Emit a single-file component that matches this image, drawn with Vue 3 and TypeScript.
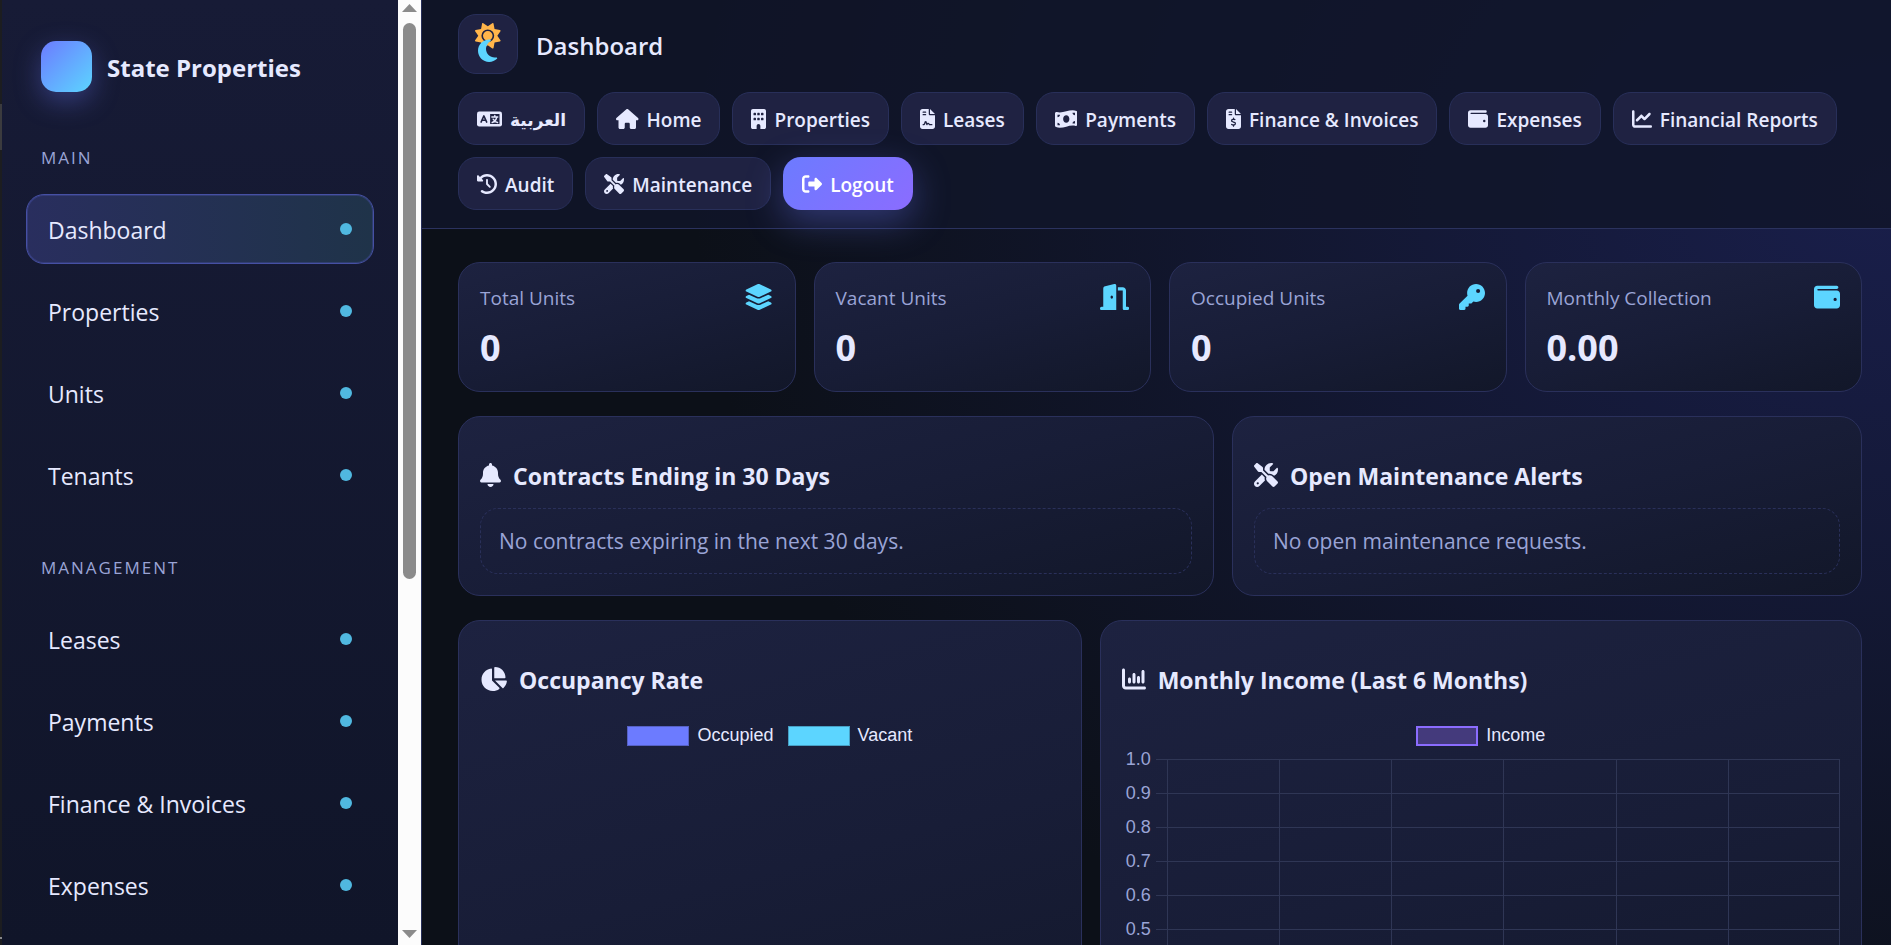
<script setup lang="ts">
interface Glyph {
  w: number
  d: string
}

const filePage =
  'M64 0C28.7 0 0 28.7 0 64L0 448c0 35.3 28.7 64 64 64l256 0c35.3 0 64-28.7 64-64l0-288-128 0c-17.7 0-32-14.3-32-32L224 0 64 0zM256 0l0 128 128 0L256 0z'

const glyphs: Record<string, Glyph> = {
  house: {
    w: 576,
    d: 'M575.8 255.5c0 18-15 32.1-32 32.1l-32 0 .7 160.2c0 2.7-.2 5.4-.5 8.1l0 16.2c0 22.1-17.9 40-40 40l-16 0c-1.1 0-2.2 0-3.3-.1c-1.4 .1-2.8 .1-4.2 .1L416 512l-24 0c-22.1 0-40-17.9-40-40l0-24 0-64c0-17.7-14.3-32-32-32l-64 0c-17.7 0-32 14.3-32 32l0 64 0 24c0 22.1-17.9 40-40 40l-24 0-31.9 0c-1.5 0-3-.1-4.5-.2c-1.2 .1-2.4 .2-3.6 .2l-16 0c-22.1 0-40-17.9-40-40l0-112c0-.9 0-1.9 .1-2.8l0-69.7-32 0c-18 0-32-14-32-32.1c0-9 3-17 10-24L266.4 8c7-7 15-8 22-8s15 2 21 7L564.8 231.5c8 7 12 15 11 24z',
  },
  building: {
    w: 384,
    d: 'M48 0C21.5 0 0 21.5 0 48L0 464c0 26.5 21.5 48 48 48l96 0 0-80c0-26.5 21.5-48 48-48s48 21.5 48 48l0 80 96 0c26.5 0 48-21.5 48-48l0-416c0-26.5-21.5-48-48-48L48 0zM64 240c0-8.8 7.2-16 16-16l32 0c8.8 0 16 7.2 16 16l0 32c0 8.8-7.2 16-16 16l-32 0c-8.8 0-16-7.2-16-16l0-32zm112-16l32 0c8.8 0 16 7.2 16 16l0 32c0 8.8-7.2 16-16 16l-32 0c-8.8 0-16-7.2-16-16l0-32c0-8.8 7.2-16 16-16zm80 16c0-8.8 7.2-16 16-16l32 0c8.8 0 16 7.2 16 16l0 32c0 8.8-7.2 16-16 16l-32 0c-8.8 0-16-7.2-16-16l0-32zM80 96l32 0c8.8 0 16 7.2 16 16l0 32c0 8.8-7.2 16-16 16l-32 0c-8.8 0-16-7.2-16-16l0-32c0-8.8 7.2-16 16-16zm80 16c0-8.8 7.2-16 16-16l32 0c8.8 0 16 7.2 16 16l0 32c0 8.8-7.2 16-16 16l-32 0c-8.8 0-16-7.2-16-16l0-32zM272 96l32 0c8.8 0 16 7.2 16 16l0 32c0 8.8-7.2 16-16 16l-32 0c-8.8 0-16-7.2-16-16l0-32c0-8.8 7.2-16 16-16z',
  },
  contract: {
    w: 384,
    d: filePage + 'M80 64l64 0c8.8 0 16 7.2 16 16s-7.2 16-16 16L80 96c-8.8 0-16-7.2-16-16s7.2-16 16-16zm0 64l64 0c8.8 0 16 7.2 16 16s-7.2 16-16 16l-64 0c-8.8 0-16-7.2-16-16s7.2-16 16-16zm54.2 253.8c-6.1 20.3-24.8 34.2-46 34.2L80 416c-8.8 0-16-7.2-16-16s7.2-16 16-16l8.2 0c7.1 0 13.3-4.6 15.3-11.4l14.9-49.5c3.4-11.3 13.8-19.1 25.6-19.1s22.2 7.7 25.6 19.1l11.6 38.6c7.4-6.2 16.8-9.7 26.8-9.7c15.9 0 30.4 9 37.5 23.2l4.4 8.8 54.1 0c8.8 0 16 7.2 16 16s-7.2 16-16 16l-64 0c-6.1 0-11.6-3.4-14.3-8.8l-8.8-17.7c-1.7-3.4-5.1-5.5-8.8-5.5s-7.2 2.1-8.8 5.5l-8.8 17.7c-2.9 5.9-9.2 9.4-15.7 8.8s-12.1-5.1-13.9-11.3L144 349l-9.8 32.8z',
  },
  money: {
    w: 576,
    d: 'M0 112.5L0 422.3c0 18 10.1 35 27 41.3c87 32.5 174 10.3 261-11.9c79.8-20.3 159.6-40.7 239.3-18.9c23 6.3 48.7-9.5 48.7-33.4l0-309.9c0-18-10.1-35-27-41.3C462 15.9 375 38.1 288 60.3C208.2 80.6 128.4 100.9 48.7 79.1C25.6 72.8 0 88.6 0 112.5zM288 352c-44.2 0-80-43-80-96s35.8-96 80-96s80 43 80 96s-35.8 96-80 96zM64 352c35.3 0 64 28.7 64 64l-64 0 0-64zm64-208c0 35.3-28.7 64-64 64l0-64 64 0zM512 304l0 64-64 0c0-35.3 28.7-64 64-64zM448 96l64 0 0 64c-35.3 0-64-28.7-64-64z',
  },
  invoice: {
    w: 384,
    d: filePage + 'M64 80c0-8.8 7.2-16 16-16l64 0c8.8 0 16 7.2 16 16s-7.2 16-16 16L80 96c-8.8 0-16-7.2-16-16zm0 64c0-8.8 7.2-16 16-16l64 0c8.8 0 16 7.2 16 16s-7.2 16-16 16l-64 0c-8.8 0-16-7.2-16-16zm128 72c8.8 0 16 7.2 16 16l0 17.3c8.5 1.2 16.7 3.1 24.1 5.1c8.5 2.3 13.6 11 11.3 19.6s-11 13.6-19.6 11.3c-11.1-3-22-5.2-32.1-5.3c-8.4-.1-17.4 1.8-23.6 5.5c-5.7 3.4-8.1 7.3-8.1 12.8c0 3.7 1.3 6.5 7.3 10.1c6.9 4.1 16.6 7.1 29.2 10.9l.5 .1c11.3 3.4 25.3 7.6 36.3 14.6c12.1 7.6 22.4 19.7 22.7 38.2c.3 19.3-9.6 33.3-22.9 41.6c-7.7 4.8-16.4 7.6-25.1 9.1l0 17.1c0 8.8-7.2 16-16 16s-16-7.2-16-16l0-17.8c-11.2-2.1-21.7-5.7-30.9-8.9c-2.1-.7-4.2-1.4-6.2-2.1c-8.4-2.8-12.9-11.9-10.1-20.2s11.9-12.9 20.2-10.1c2.5 .8 4.8 1.6 7.1 2.4c13.6 4.6 24.6 8.4 36.3 8.7c9.1 .3 17.9-1.7 23.7-5.3c5.1-3.2 7.9-7.3 7.8-14c-.1-4.6-1.8-7.8-7.7-11.6c-6.8-4.3-16.5-7.4-29-11.2l-1.6-.5c-11-3.3-24.3-7.3-34.8-13.7c-12-7.2-22.6-18.9-22.7-37.3c-.1-19.4 10.8-32.8 23.8-40.5c7.5-4.4 15.8-7.2 24.1-8.7l0-17.3c0-8.8 7.2-16 16-16z',
  },
  wallet: {
    w: 512,
    d: 'M64 32C28.7 32 0 60.7 0 96L0 416c0 35.3 28.7 64 64 64l384 0c35.3 0 64-28.7 64-64l0-224c0-35.3-28.7-64-64-64L80 128c-8.8 0-16-7.2-16-16s7.2-16 16-16l368 0c17.7 0 32-14.3 32-32s-14.3-32-32-32L64 32zM416 272a32 32 0 1 1 0 64 32 32 0 1 1 0-64z',
  },
  line: {
    w: 512,
    d: 'M64 64c0-17.7-14.3-32-32-32S0 46.3 0 64L0 400c0 44.2 35.8 80 80 80l400 0c17.7 0 32-14.3 32-32s-14.3-32-32-32L80 416c-8.8 0-16-7.2-16-16L64 64zm406.6 86.6c12.5-12.5 12.5-32.8 0-45.3s-32.8-12.5-45.3 0L320 210.7l-57.4-57.4c-12.5-12.5-32.8-12.5-45.3 0l-112 112c-12.5 12.5-12.5 32.8 0 45.3s32.8 12.5 45.3 0L240 221.3l57.4 57.4c12.5 12.5 32.8 12.5 45.3 0l128-128z',
  },
  history: {
    w: 512,
    d: 'M75 75L41 41C25.9 25.9 0 36.6 0 57.9L0 168c0 13.3 10.7 24 24 24l110.1 0c21.4 0 32.1-25.9 17-41l-30.8-30.8C155 85.5 203 64 256 64c106 0 192 86 192 192s-86 192-192 192c-40.8 0-78.6-12.7-109.7-34.4c-14.5-10.1-34.4-6.6-44.6 7.9s-6.6 34.4 7.9 44.6C151.2 495 201.7 512 256 512c141.4 0 256-114.6 256-256S397.4 0 256 0C185.3 0 121.3 28.7 75 75zm181 53c-13.3 0-24 10.7-24 24l0 104c0 6.4 2.5 12.5 7 17l72 72c9.4 9.4 24.6 9.4 33.9 0s9.4-24.6 0-33.9l-65-65 0-94.1c0-13.3-10.7-24-24-24z',
  },
  tools: {
    w: 512,
    d: 'M78.6 5C69.1-2.4 55.6-1.5 47 7L7 47c-8.5 8.5-9.4 22-2.1 31.6l80 104c4.5 5.9 11.6 9.4 19 9.4l54.1 0 109 109c-14.7 29-10 65.4 14.3 89.6l112 112c12.5 12.5 32.8 12.5 45.3 0l64-64c12.5-12.5 12.5-32.8 0-45.3l-112-112c-24.2-24.2-60.6-29-89.6-14.3l-109-109 0-54.1c0-7.5-3.5-14.5-9.4-19L78.6 5zM19.9 396.1C7.2 408.8 0 426.1 0 444.1C0 481.6 30.4 512 67.9 512c18 0 35.3-7.2 48-19.9L233.7 374.3c-7.8-20.9-9-43.6-3.6-65.1l-61.7-61.7L19.9 396.1zM512 144c0-10.5-1.1-20.7-3.2-30.5c-2.4-11.2-16.1-14.1-24.2-6l-63.9 63.9c-3 3-7.1 4.7-11.3 4.7L352 176c-8.8 0-16-7.2-16-16l0-57.4c0-4.2 1.7-8.3 4.7-11.3l63.9-63.9c8.1-8.1 5.2-21.8-6-24.2C388.7 1.1 378.5 0 368 0C288.5 0 224 64.5 224 144l0 .8 85.3 85.3c36-9.1 75.8 .5 104 28.7L429 274.5c49-23 83-72.8 83-130.5zM56 432a24 24 0 1 1 48 0 24 24 0 1 1 -48 0z',
  },
  logout: {
    w: 512,
    d: 'M377.9 105.9L500.7 228.7c7.2 7.2 11.3 17.1 11.3 27.3s-4.1 20.1-11.3 27.3L377.9 406.1c-6.4 6.4-15 9.9-24 9.9c-18.7 0-33.9-15.2-33.9-33.9l0-62.1-128 0c-17.7 0-32-14.3-32-32l0-64c0-17.7 14.3-32 32-32l128 0 0-62.1c0-18.7 15.2-33.9 33.9-33.9c9 0 17.6 3.6 24 9.9zM160 96L96 96c-17.7 0-32 14.3-32 32l0 256c0 17.7 14.3 32 32 32l64 0c17.7 0 32 14.3 32 32s-14.3 32-32 32l-64 0c-53 0-96-43-96-96L0 128C0 75 43 32 96 32l64 0c17.7 0 32 14.3 32 32s-14.3 32-32 32z',
  },
  layers: {
    w: 576,
    d: 'M264.5 5.2c14.9-6.9 32.1-6.9 47 0l218.6 101c8.5 3.9 13.9 12.4 13.9 21.8s-5.4 17.9-13.9 21.8l-218.6 101c-14.9 6.9-32.1 6.9-47 0L45.9 149.8C37.4 145.8 32 137.3 32 128s5.4-17.9 13.9-21.8L264.5 5.2zM476.9 209.6l53.2 24.6c8.5 3.9 13.9 12.4 13.9 21.8s-5.4 17.9-13.9 21.8l-218.6 101c-14.9 6.9-32.1 6.9-47 0L45.9 277.8C37.4 273.8 32 265.3 32 256s5.4-17.9 13.9-21.8l53.2-24.6 152 70.2c23.4 10.8 50.4 10.8 73.8 0l152-70.2zm-152 198.2l152-70.2 53.2 24.6c8.5 3.9 13.9 12.4 13.9 21.8s-5.4 17.9-13.9 21.8l-218.6 101c-14.9 6.9-32.1 6.9-47 0L45.9 405.8C37.4 401.8 32 393.3 32 384s5.4-17.9 13.9-21.8l53.2-24.6 152 70.2c23.4 10.8 50.4 10.8 73.8 0z',
  },
  door: {
    w: 576,
    d: 'M320 32c0-9.9-4.5-19.2-12.3-25.2S289.8-1.4 280.2 1l-179.9 45C79 51.3 64 70.5 64 92.5L64 448l-32 0c-17.7 0-32 14.3-32 32s14.3 32 32 32l64 0 192 0 32 0 0-32 0-448zM256 256c0 17.7-10.7 32-24 32s-24-14.3-24-32s10.7-32 24-32s24 14.3 24 32zm96-128l96 0 0 352c0 17.7 14.3 32 32 32l64 0c17.7 0 32-14.3 32-32s-14.3-32-32-32l-32 0 0-320c0-35.3-28.7-64-64-64l-96 0 0 64z',
  },
  key: {
    w: 512,
    d: 'M336 352c97.2 0 176-78.8 176-176S433.2 0 336 0S160 78.8 160 176c0 18.7 2.9 36.8 8.3 53.7L7 391c-4.5 4.5-7 10.6-7 17l0 80c0 13.3 10.7 24 24 24l80 0c13.3 0 24-10.7 24-24l0-40 40 0c13.3 0 24-10.7 24-24l0-40 40 0c6.4 0 12.5-2.5 17-7l33.3-33.3c16.9 5.4 35 8.3 53.7 8.3zM376 96a40 40 0 1 1 0 80 40 40 0 1 1 0-80z',
  },
  bell: {
    w: 448,
    d: 'M224 0c-17.7 0-32 14.3-32 32l0 19.2C119 66 64 130.6 64 208l0 18.8c0 47-17.3 92.4-48.5 127.6l-7.4 8.3c-8.4 9.4-10.4 22.9-5.3 34.4S19.4 416 32 416l384 0c12.6 0 24-7.4 29.2-18.9s3.1-25-5.3-34.4l-7.4-8.3C401.3 319.2 384 273.9 384 226.8l0-18.8c0-77.4-55-142-128-156.8L256 32c0-17.7-14.3-32-32-32zm45.3 493.3c12-12 18.7-28.3 18.7-45.3l-64 0-64 0c0 17 6.7 33.3 18.7 45.3s28.3 18.7 45.3 18.7s33.3-6.7 45.3-18.7z',
  },
  pie: {
    w: 576,
    d: 'M304 240l0-223.4c0-9 7-16.6 16-16.6C443.7 0 544 100.3 544 224c0 9-7.6 16-16.6 16L304 240zM32 272C32 150.7 122.1 50.3 239 34.3c9.2-1.3 17 6.1 17 15.4L256 288 412.5 444.5c6.7 6.7 6.2 17.7-1.5 23.1C371.8 495.6 323.8 512 272 512C139.5 512 32 404.6 32 272zm526.4 16c9.3 0 16.6 7.8 15.4 17c-7.7 55.9-34.6 105.6-73.9 142.3c-6 5.6-15.4 5.2-21.2-.7L320 288l238.4 0z',
  },
  columns: {
    w: 512,
    d: 'M32 32c17.7 0 32 14.3 32 32l0 336c0 8.8 7.2 16 16 16l400 0c17.7 0 32 14.3 32 32s-14.3 32-32 32L80 480c-44.2 0-80-35.8-80-80L0 64C0 46.3 14.3 32 32 32zM160 224c17.7 0 32 14.3 32 32l0 64c0 17.7-14.3 32-32 32s-32-14.3-32-32l0-64c0-17.7 14.3-32 32-32zm128-64l0 160c0 17.7-14.3 32-32 32s-32-14.3-32-32l0-160c0-17.7 14.3-32 32-32s32 14.3 32 32zm64 32c17.7 0 32 14.3 32 32l0 96c0 17.7-14.3 32-32 32s-32-14.3-32-32l0-96c0-17.7 14.3-32 32-32zM480 96l0 224c0 17.7-14.3 32-32 32s-32-14.3-32-32l0-224c0-17.7 14.3-32 32-32s32 14.3 32 32z',
  },
}

const box = (name: string): string => `0 0 ${glyphs[name].w} 512`

const sections = [
  { title: 'MAIN', items: ['Dashboard', 'Properties', 'Units', 'Tenants'] },
  { title: 'MANAGEMENT', items: ['Leases', 'Payments', 'Finance & Invoices', 'Expenses'] },
]

const actions = [
  { label: 'Home', icon: 'house' },
  { label: 'Properties', icon: 'building' },
  { label: 'Leases', icon: 'contract' },
  { label: 'Payments', icon: 'money' },
  { label: 'Finance & Invoices', icon: 'invoice' },
  { label: 'Expenses', icon: 'wallet' },
  { label: 'Financial Reports', icon: 'line' },
  { label: 'Audit', icon: 'history' },
  { label: 'Maintenance', icon: 'tools' },
]

const stats = [
  { label: 'Total Units', value: '0', icon: 'layers' },
  { label: 'Vacant Units', value: '0', icon: 'door' },
  { label: 'Occupied Units', value: '0', icon: 'key' },
  { label: 'Monthly Collection', value: '0.00', icon: 'wallet' },
]

const alerts = [
  { title: 'Contracts Ending in 30 Days', icon: 'bell', text: 'No contracts expiring in the next 30 days.' },
  { title: 'Open Maintenance Alerts', icon: 'tools', text: 'No open maintenance requests.' },
]

const ticks = ['1.0', '0.9', '0.8', '0.7', '0.6', '0.5']
</script>

<template>
  <div class="app">
    <div class="edge"><i class="edge-grip"></i><i class="edge-mark"></i></div>
    <aside class="sidebar">
      <div class="brand">
        <span class="logo"></span>
        <span class="brand-name">State Properties</span>
      </div>
      <nav v-for="section in sections" :key="section.title" class="section">
        <h2 class="section-title">{{ section.title }}</h2>
        <a
          v-for="item in section.items"
          :key="item"
          href="#"
          class="nav-item"
          :class="{ active: item === 'Dashboard' }"
        >
          <span>{{ item }}</span>
          <i class="dot"></i>
        </a>
      </nav>
    </aside>
    <div class="scrollbar" aria-hidden="true">
      <svg class="arrow" viewBox="0 0 15 8"><path d="M7.500 0L15 8H0z" /></svg>
      <div class="track"><div class="thumb"></div></div>
      <svg class="arrow" viewBox="0 0 15 8"><path d="M0 0H15L7.500 8z" /></svg>
    </div>

    <div class="main">
      <header class="topbar">
        <div class="title-row">
          <button class="theme" type="button" aria-label="Toggle theme">
            <svg viewBox="0 0 26 42">
              <path
                fill="#ffb54a"
                transform="scale(.05)"
                d="M361.5 1.2c5 2.1 8.6 6.6 9.6 11.9L391 121l107.9 19.8c5.3 1 9.8 4.6 11.9 9.6s1.5 10.7-1.6 15.2L446.9 256l62.3 90.3c3.1 4.5 3.7 10.2 1.6 15.2s-6.6 8.6-11.9 9.6L391 391 371.1 498.9c-1 5.3-4.6 9.8-9.6 11.9s-10.7 1.5-15.2-1.6L256 446.9l-90.3 62.3c-4.5 3.1-10.2 3.7-15.2 1.6s-8.6-6.6-9.6-11.9L121 391 13.1 371.1c-5.3-1-9.8-4.6-11.9-9.6s-1.5-10.7 1.6-15.2L65.1 256 2.8 165.7c-3.1-4.5-3.7-10.2-1.6-15.2s6.6-8.6 11.9-9.6L121 121 140.9 13.1c1-5.3 4.6-9.8 9.6-11.9s10.7-1.5 15.2 1.6L256 65.1 346.3 2.8c4.5-3.1 10.2-3.7 15.2-1.6zM160 256a96 96 0 1 1 192 0 96 96 0 1 1 -192 0zm224 0a128 128 0 1 0 -256 0 128 128 0 1 0 256 0z"
              />
              <path
                fill="#5cd5ff"
                transform="translate(3 15) scale(.05)"
                d="M223.500 32C100 32 0 132.300 0 256S100 480 223.500 480c60.600 0 115.500-24.200 155.800-63.400c5-4.900 6.300-12.500 3.100-18.700s-10.100-9.700-17-8.500c-9.800 1.700-19.800 2.600-30.100 2.600c-96.900 0-175.500-78.800-175.500-176c0-65.800 36-123.100 89.300-153.300c6.100-3.500 9.200-10.500 7.700-17.300s-7.300-11.900-14.300-12.500c-6.300-.5-12.600-.8-19-.8z"
              />
            </svg>
          </button>
          <h1>Dashboard</h1>
        </div>
        <div class="actions">
          <a class="action" href="#">
            <svg class="icon" viewBox="0 0 640 512">
              <rect y="64" width="640" height="384" rx="56" fill="currentColor" />
              <g fill="none" stroke-linecap="round" stroke-linejoin="round">
                <path stroke="#1f2242" stroke-width="40" d="M104 336L176 176L248 336M130 286H222" />
                <rect x="336" y="128" width="240" height="256" fill="#1f2242" />
                <path stroke="currentColor" stroke-width="36" d="M456 164V196M380 206H532M506 212C488 284 442 330 388 346M414 260C440 306 482 338 526 346" />
              </g>
            </svg>
            <span lang="ar">العربية</span>
          </a>
          <a v-for="a in actions" :key="a.label" class="action" href="#">
            <svg class="icon" :viewBox="box(a.icon)"><path fill="currentColor" :d="glyphs[a.icon].d" /></svg>
            <span>{{ a.label }}</span>
          </a>
          <button class="action primary" type="button">
            <svg class="icon" :viewBox="box('logout')"><path fill="currentColor" :d="glyphs.logout.d" /></svg>
            <span>Logout</span>
          </button>
        </div>
      </header>

      <main class="content">
        <section class="stats">
          <article v-for="s in stats" :key="s.label" class="card">
            <div class="stat-head">
              <span>{{ s.label }}</span>
              <svg class="stat-icon" :viewBox="box(s.icon)"><path fill="currentColor" :d="glyphs[s.icon].d" /></svg>
            </div>
            <div class="stat-value">{{ s.value }}</div>
          </article>
        </section>

        <section class="alerts">
          <article v-for="a in alerts" :key="a.title" class="card">
            <h3>
              <svg :viewBox="box(a.icon)"><path fill="currentColor" :d="glyphs[a.icon].d" /></svg>
              <span>{{ a.title }}</span>
            </h3>
            <p class="empty">{{ a.text }}</p>
          </article>
        </section>

        <section class="charts">
          <article class="card">
            <h3>
              <svg :viewBox="box('pie')"><path fill="currentColor" :d="glyphs.pie.d" /></svg>
              <span>Occupancy Rate</span>
            </h3>
            <div class="legend">
              <span class="key"><i class="swatch occupied"></i>Occupied</span>
              <span class="key"><i class="swatch vacant"></i>Vacant</span>
            </div>
          </article>
          <article class="card">
            <h3>
              <svg :viewBox="box('columns')"><path fill="currentColor" :d="glyphs.columns.d" /></svg>
              <span>Monthly Income (Last 6 Months)</span>
            </h3>
            <div class="legend">
              <span class="key"><i class="swatch income"></i>Income</span>
            </div>
            <div class="chart">
              <div class="ticks"><span v-for="t in ticks" :key="t">{{ t }}</span></div>
              <div class="plot">
                <div v-for="r in 10" :key="r" class="plot-row">
                  <i class="tick-mark"></i><i v-for="c in 6" :key="c" class="cell"></i>
                </div>
              </div>
            </div>
          </article>
        </section>
      </main>
    </div>
  </div>
</template>

<style>
body {
  background: #0c1019;
  overflow: hidden;
}
</style>

<style scoped>
* {
  box-sizing: border-box;
}

.app {
  display: flex;
  height: 100vh;
  overflow: hidden;
  color: #e6e9ff;
  font-family: "Segoe UI", "Open Sans", "DejaVu Sans", sans-serif;
  background:
    radial-gradient(1200px 900px at 100% 20%, rgba(42, 49, 140, 0.44), transparent 100%),
    #0c1018;
}

.edge {
  display: flex;
  flex-direction: column;
  justify-content: space-between;
  flex: 0 0 2px;
  padding: 104px 0 6px;
  background: #1c1d20;
}

.edge-grip {
  height: 46px;
  background: #3b3b3e;
}

.edge-mark {
  height: 2px;
  background: #88888c;
}

.sidebar {
  flex: 0 0 396px;
  padding: 41px 24px 0;
  overflow: hidden;
  background: linear-gradient(180deg, #171b36, #101529);
}

.brand {
  display: flex;
  align-items: center;
  gap: 15px;
  padding-left: 15px;
  margin-bottom: 54px;
}

.logo {
  width: 51px;
  height: 51px;
  border-radius: 15px;
  background: linear-gradient(135deg, #6c7bff, #5cd5ff);
  box-shadow: 0 9px 27px rgba(108, 123, 255, 0.35);
}

.brand-name {
  font-size: 24px;
  font-weight: 700;
}

.section {
  display: flex;
  flex-direction: column;
  gap: 12px;
  margin-bottom: 46px;
}

.section-title {
  margin: 0 0 12px;
  padding-left: 15px;
  font-size: 17px;
  font-weight: 400;
  line-height: 24px;
  letter-spacing: 2px;
  color: #9aa4d6;
}

.nav-item {
  display: flex;
  align-items: center;
  justify-content: space-between;
  height: 70px;
  padding: 0 21px;
  border: 1px solid transparent;
  border-radius: 18px;
  color: #e6e9ff;
  font-size: 23px;
  text-decoration: none;
}

.brand-name,
.nav-item span,
.action span,
.stat-head span,
h1,
h3 span {
  padding-top: 2px;
}

.nav-item.active {
  border-color: #4650a4;
  background: linear-gradient(90deg, #292e5e, #1f3349);
  box-shadow: inset 0 0 0 1px rgba(70, 80, 164, 0.4);
}

.dot {
  width: 12px;
  height: 12px;
  border-radius: 50%;
  background: #50b8e0;
}

.scrollbar {
  display: flex;
  flex-direction: column;
  align-items: center;
  flex: 0 0 23px;
  padding: 4px 0 7px;
  background: #fcfcfc;
}

.arrow {
  width: 15px;
  height: 8px;
  fill: #8b8b8b;
}

.track {
  flex: 1;
  padding-top: 11px;
}

.thumb {
  width: 13px;
  height: 61.3%;
  border-radius: 7px;
  background: #8b8b8b;
}

.main {
  flex: 1;
  min-width: 0;
  border-left: 1px solid #262e59;
}

.topbar {
  padding: 14px 29px 18px 36px;
  border-bottom: 1px solid #2b325e;
  background: rgba(17, 22, 42, 0.84);
}

.title-row {
  display: flex;
  align-items: center;
  gap: 18px;
  margin-bottom: 18px;
}

.theme {
  display: grid;
  place-items: center;
  width: 60px;
  height: 60px;
  padding: 0;
  border: 1px solid #282f59;
  border-radius: 18px;
  background: #1f2242;
}

.theme svg {
  width: 26px;
  height: 42px;
}

h1 {
  margin: 0;
  font-size: 24px;
  font-weight: 600;
}

.actions {
  display: flex;
  flex-wrap: wrap;
  gap: 12px;
}

.action {
  display: flex;
  align-items: center;
  gap: 8px;
  height: 53px;
  padding: 0 18px;
  border: 1px solid #282f59;
  border-radius: 18px;
  background: #1f2242;
  color: #e6e9ff;
  font-family: inherit;
  font-size: 19px;
  font-weight: 600;
  text-decoration: none;
}

.action span:lang(ar) {
  font-size: 17px;
}

.icon {
  height: 20px;
}

.action.primary {
  border-color: transparent;
  background: linear-gradient(135deg, #6c7bff, #8b6cff) border-box;
  color: #fff;
  box-shadow: 0 12px 36px rgba(108, 123, 255, 0.35);
}

.content {
  display: flex;
  flex-direction: column;
  gap: 24px;
  padding: 33px 29px 24px 36px;
}

.stats,
.alerts,
.charts {
  display: grid;
  gap: 18px;
}

.stats {
  grid-template-columns: repeat(4, 1fr);
}

.alerts {
  grid-template-columns: 1.2fr 1fr;
}

.charts {
  grid-template-columns: 0.9fr 1.1fr;
}

.card {
  min-width: 0;
  padding: 21px;
  border: 1px solid #2a305b;
  border-radius: 22px;
  background: linear-gradient(165deg, #1d2240, #181d37 50%, #121729);
}

.stat-head {
  display: flex;
  align-items: center;
  justify-content: space-between;
  height: 26px;
  color: #9aa4d6;
  font-size: 19px;
}

.stat-icon {
  height: 26px;
  color: #5cd5ff;
}

.stat-value {
  margin-top: 16px;
  font-size: 36px;
  font-weight: 700;
  line-height: 44px;
}

h3 {
  display: flex;
  align-items: center;
  gap: 12px;
  height: 33px;
  margin: 20px 0 17px;
  font-size: 23px;
  font-weight: 700;
}

h3 svg {
  height: 24px;
}

.empty {
  margin: 0;
  padding: 17px 18px;
  border: 1px dashed #2a305a;
  border-radius: 18px;
  color: #9aa4d6;
  font-size: 21px;
  line-height: 30px;
}

.legend {
  display: flex;
  justify-content: center;
  gap: 14px;
  margin-top: 31px;
  font-family: "Liberation Sans", Arial, sans-serif;
  font-size: 18px;
  line-height: 19px;
}

.key {
  display: flex;
  gap: 8px;
}

.swatch {
  width: 62px;
  height: 20px;
  border: 1px solid #5661c4;
}

.occupied {
  background: #6c7bff;
}

.vacant {
  border-color: #479fc4;
  background: #5cd5ff;
}

.income {
  border: 2px solid #8b6cff;
  background: #443a7c;
}

.chart {
  display: flex;
  gap: 5px;
  padding-left: 4px;
  margin-top: 2px;
}

.ticks {
  display: flex;
  flex-direction: column;
  align-items: flex-end;
  color: #9aa4d6;
  font-family: "Liberation Sans", Arial, sans-serif;
  font-size: 18px;
  line-height: 22px;
}

.ticks span {
  margin-bottom: 12px;
}

.plot {
  flex: 1;
  padding-top: 11px;
}

.plot-row {
  display: grid;
  grid-template-columns: 11px repeat(6, 1fr);
  height: 34px;
}

.tick-mark {
  border-top: 1px solid #2f3655;
}

.cell {
  border-top: 1px solid #2f3655;
  border-left: 1px solid #2f3655;
}

.cell:last-child {
  border-right: 1px solid #2f3655;
}
</style>
